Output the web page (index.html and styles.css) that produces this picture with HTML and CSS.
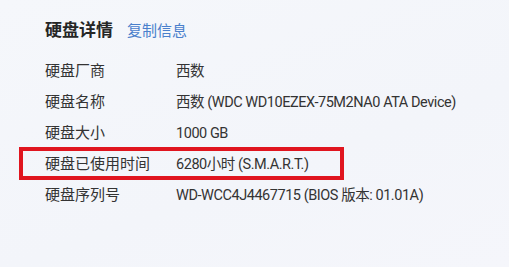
FILE: index.html
```html
<!DOCTYPE html>
<html lang="zh-CN">
<head>
<meta charset="utf-8">
<title>硬盘详情</title>
<link rel="stylesheet" href="styles.css">
</head>
<body>
<div class="panel">
  <div class="header">
    <span class="title">硬盘详情</span>
    <a class="copy" href="#">复制信息</a>
  </div>
  <div class="rows">
    <div class="row"><span class="label">硬盘厂商</span><span class="value">西数</span></div>
    <div class="row"><span class="label">硬盘名称</span><span class="value">西数 (WDC WD10EZEX-75M2NA0 ATA Device)</span></div>
    <div class="row"><span class="label">硬盘大小</span><span class="value">1000 GB</span></div>
    <div class="row highlight"><span class="label">硬盘已使用时间</span><span class="value">6280小时 (S.M.A.R.T.)</span></div>
    <div class="row"><span class="label">硬盘序列号</span><span class="value">WD-WCC4J4467715 (BIOS 版本: 01.01A)</span></div>
  </div>
</div>
</body>
</html>
```
FILE: styles.css
```css
html, body {
  margin: 0;
  padding: 0;
  height: 100%;
}
body {
  background: linear-gradient(160deg, #f5f7fb 0%, #f3f5fa 60%, #f5f6fb 100%);
  font-family: "Roboto", "Noto Sans CJK SC", sans-serif;
  color: #333;
}
.panel {
  padding: 18px 0 0 45px;
}
.header {
  display: flex;
  align-items: baseline;
  gap: 14px;
  height: 24px;
  line-height: 24px;
}
.title {
  font-size: 17px;
  font-weight: bold;
  color: #262626;
}
.copy {
  font-size: 15px;
  color: #4a80cc;
  text-decoration: none;
}
.rows {
  margin-top: 14px;
}
.row {
  display: flex;
  height: 31px;
  line-height: 31px;
  position: relative;
}
.label {
  width: 131px;
  flex: none;
  font-size: 15px;
  color: #333;
}
.value {
  font-size: 14.5px;
  letter-spacing: -0.45px;
  color: #333;
}
.highlight::after {
  content: "";
  position: absolute;
  left: -26px;
  top: -2px;
  width: 325px;
  height: 33px;
  box-sizing: border-box;
  border: 4px solid #e0151f;
}
```
